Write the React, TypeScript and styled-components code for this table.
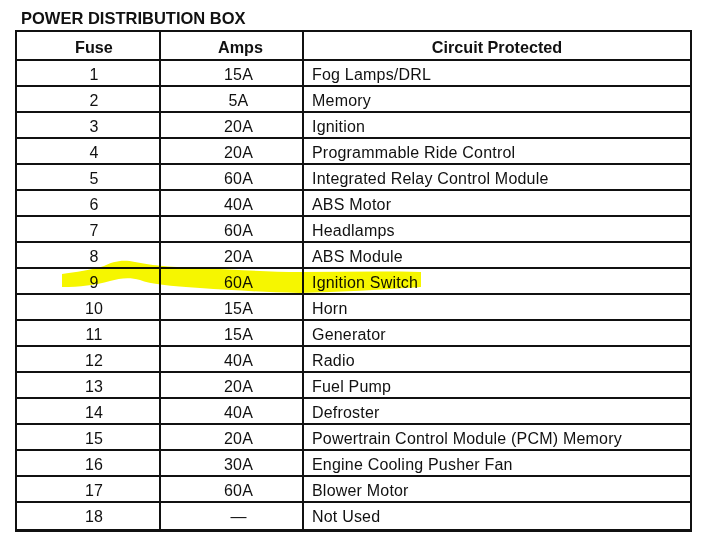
import styled, { createGlobalStyle } from 'styled-components';

interface FUSE {
  fuse: string;
  amps: string;
  circuit: string;
}

const fuses: FUSE[] = [
  { fuse: '1', amps: '15A', circuit: 'Fog Lamps/DRL' },
  { fuse: '2', amps: '5A', circuit: 'Memory' },
  { fuse: '3', amps: '20A', circuit: 'Ignition' },
  { fuse: '4', amps: '20A', circuit: 'Programmable Ride Control' },
  { fuse: '5', amps: '60A', circuit: 'Integrated Relay Control Module' },
  { fuse: '6', amps: '40A', circuit: 'ABS Motor' },
  { fuse: '7', amps: '60A', circuit: 'Headlamps' },
  { fuse: '8', amps: '20A', circuit: 'ABS Module' },
  { fuse: '9', amps: '60A', circuit: 'Ignition Switch' },
  { fuse: '10', amps: '15A', circuit: 'Horn' },
  { fuse: '11', amps: '15A', circuit: 'Generator' },
  { fuse: '12', amps: '40A', circuit: 'Radio' },
  { fuse: '13', amps: '20A', circuit: 'Fuel Pump' },
  { fuse: '14', amps: '40A', circuit: 'Defroster' },
  { fuse: '15', amps: '20A', circuit: 'Powertrain Control Module (PCM) Memory' },
  { fuse: '16', amps: '30A', circuit: 'Engine Cooling Pusher Fan' },
  { fuse: '17', amps: '60A', circuit: 'Blower Motor' },
  { fuse: '18', amps: '—', circuit: 'Not Used' },
];

const GlobalStyle = createGlobalStyle`
  body {
    margin: 0;
    background: #fff;
    color: #111;
    font-family: "Liberation Sans", Arial, Helvetica, sans-serif;
  }
`;

const Page = styled.div`
  position: relative;
  width: 705px;
  height: 546px;
  overflow: hidden;
  background: #fff;
`;

const Title = styled.div`
  padding: 8px 0 0 21px;
  height: 20px;
  margin-bottom: 2px;
  font-size: 16.5px;
  line-height: 20px;
  font-weight: 700;
`;

const FuseTable = styled.div`
  margin-left: 15px;
  width: 677px;
  box-sizing: border-box;
  border: 2px solid #111;
  border-bottom-width: 3px;
`;

const Row = styled.div<{ $header?: boolean }>`
  display: grid;
  grid-template-columns: 144px 143px 1fr;
  height: ${({ $header }) => ($header ? '29px' : '26px')};
  box-sizing: border-box;
  border-bottom: 2px solid #111;
  font-size: ${({ $header }) => ($header ? '16.2px' : '16px')};
  font-weight: ${({ $header }) => ($header ? 700 : 400)};
  letter-spacing: ${({ $header }) => ($header ? '0' : '0.2px')};
  &:last-child {
    border-bottom: none;
  }
`;

const Cell = styled.div<{ $left?: boolean; $shift?: number }>`
  box-sizing: border-box;
  padding-top: 3px;
  padding-left: ${({ $left, $shift }) => ($left ? '8px' : `${$shift ?? 0}px`)};
  line-height: 21px;
  text-align: ${({ $left }) => ($left ? 'left' : 'center')};
  white-space: nowrap;
  border-right: 2px solid #111;
  &:last-child {
    border-right: none;
  }
`;

const HeadCell = styled(Cell)`
  padding-top: 2px;
  line-height: 27px;
`;

const Highlight = styled.svg`
  position: absolute;
  top: 0;
  left: 0;
  width: 705px;
  height: 546px;
  pointer-events: none;
  mix-blend-mode: multiply;
`;

const App = () => {
  return (
    <Page>
      <GlobalStyle />
      <Title>POWER DISTRIBUTION BOX</Title>
      <FuseTable>
        <Row $header>
          <HeadCell $shift={12}>Fuse</HeadCell>
          <HeadCell $shift={18}>Amps</HeadCell>
          <HeadCell>Circuit Protected</HeadCell>
        </Row>
        {fuses.map((f) => (
          <Row key={f.fuse}>
            <Cell $shift={12}>{f.fuse}</Cell>
            <Cell $shift={14}>{f.amps}</Cell>
            <Cell $left>{f.circuit}</Cell>
          </Row>
        ))}
      </FuseTable>
      {/* marker stroke over fuse 9 */}
      <Highlight viewBox="0 0 705 546">
        <path
          d="M62,274 C75,272 92,270 104,266 C112,262 122,259 135,262 C150,265 165,267 200,268 C240,270 270,272 300,272 C340,272 380,271 421,272 L421,287 C380,290 340,292 300,293 C260,292 230,290 200,288 C170,286 150,284 140,280 C130,277 120,278 110,281 C95,285 80,287 62,287 Z"
          fill="#f6f600"
        />
      </Highlight>
    </Page>
  );
};

export default App;
